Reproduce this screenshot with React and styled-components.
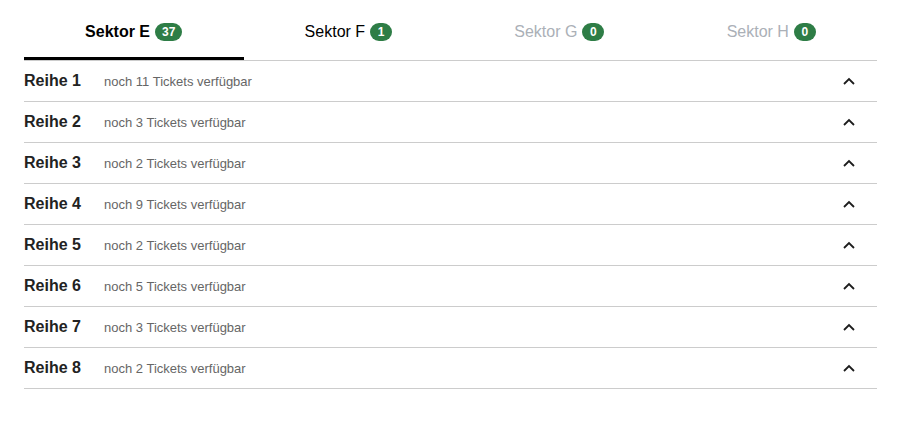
import styled, { createGlobalStyle } from 'styled-components';

const GlobalStyle = createGlobalStyle`
  body {
    margin: 0;
    background: #fff;
    font-family: 'Liberation Sans', Arial, sans-serif;
  }
`;

const tabs = [
  { name: 'Sektor E', count: 37, active: true },
  { name: 'Sektor F', count: 1 },
  { name: 'Sektor G', count: 0, disabled: true },
  { name: 'Sektor H', count: 0, disabled: true },
];

const rows = [11, 3, 2, 9, 2, 5, 3, 2];

const App = () => {
  return (
    <>
      <GlobalStyle />
      <Wrapper>
        <TabList>
          {tabs.map((tab) => (
            <Tab key={tab.name} $active={tab.active} $disabled={tab.disabled}>
              {tab.name}
              <Badge>{tab.count}</Badge>
            </Tab>
          ))}
        </TabList>
        {rows.map((count, i) => (
          <Row key={i}>
            <RowTitle>Reihe {i + 1}</RowTitle>
            <RowInfo>noch {count} Tickets verfügbar</RowInfo>
            <Chevron viewBox='0 0 12 8' aria-hidden='true'>
              <path d='M1 7 L6 2 L11 7' />
            </Chevron>
          </Row>
        ))}
      </Wrapper>
    </>
  );
};

export default App;

const Wrapper = styled.div`
  padding: 0 24px;
`;

const TabList = styled.div`
  display: flex;
  border-bottom: 1px solid #cccccc;
`;

const Tab = styled.div`
  flex: 1 1 auto;
  display: flex;
  justify-content: center;
  align-items: center;
  padding-top: 7px;
  box-sizing: border-box;
  height: 60px;
  font-size: 16px;
  line-height: 24px;
  font-weight: ${(props) => (props.$active ? 700 : 400)};
  color: ${(props) => (props.$disabled ? '#abb0b7' : '#000')};
  border-bottom: 3px solid ${(props) => (props.$active ? '#000' : 'transparent')};
`;

const Badge = styled.span`
  display: inline-flex;
  align-items: center;
  justify-content: center;
  min-width: 22px;
  height: 18px;
  box-sizing: border-box;
  margin-left: 5px;
  padding: 0 7px;
  border-radius: 9px;
  background-color: #2e7d46;
  color: #fff;
  font-size: 12px;
  font-weight: 700;
`;

const Row = styled.div`
  display: flex;
  align-items: center;
  height: 41px;
  box-sizing: border-box;
  border-bottom: 1px solid #cccccc;
`;

const RowTitle = styled.span`
  width: 80px;
  font-size: 16px;
  font-weight: 700;
  color: #222;
`;

const RowInfo = styled.span`
  flex: 1;
  font-size: 13px;
  color: #666;
`;

const Chevron = styled.svg`
  width: 12px;
  height: 8px;
  margin-right: 22px;
  fill: none;
  stroke: #1c1c1c;
  stroke-width: 1.8;
`;
